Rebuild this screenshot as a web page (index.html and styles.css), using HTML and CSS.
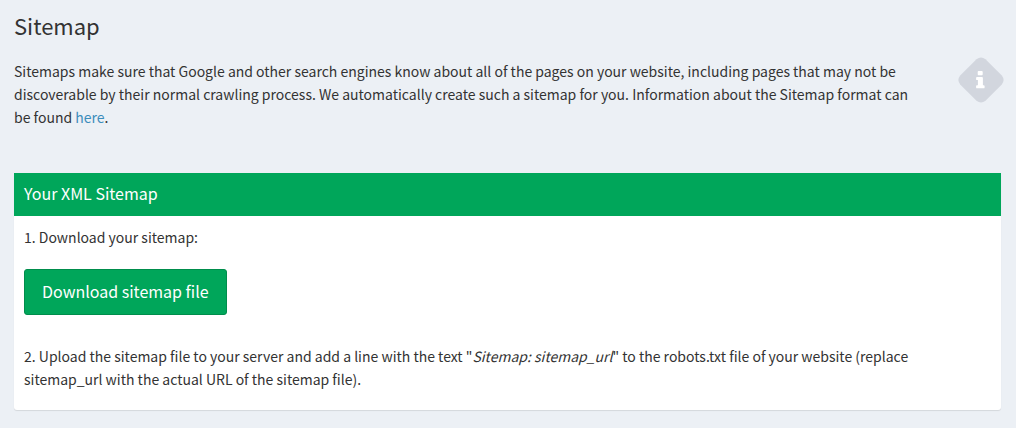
FILE: index.html
```html
<!DOCTYPE html>
<html lang="en">
<head>
    <meta charset="UTF-8">
    <meta name="viewport" content="width=device-width, initial-scale=1.0">
    <title>Sitemap</title>
    <link rel="stylesheet" href="styles.css">
</head>
<body>
    <main class="content">
        <h1>Sitemap</h1>
        <section class="intro">
            <p>Sitemaps make sure that Google and other search engines know about all of the pages on your website, including pages that may not be discoverable by their normal crawling process. We automatically create such a sitemap for you. Information about the Sitemap format can be found <a href="#">here</a>.</p>
            <svg class="info-icon" viewBox="0 0 46 46" aria-hidden="true">
                <path fill="#d2d6de" d="M18.5 2.2Q23-1.4 27.5 2.2L43.8 18.5Q47.4 23 43.8 27.5L27.5 43.8Q23 47.4 18.5 43.8L2.2 27.5Q-1.4 23 2.2 18.5Z"/>
                <path fill="#fff" d="M20.6 14h3.2q.9 0 .9.9v2.4q0 .9-.9.9h-3.2q-.9 0-.9-.9v-2.4q0-.9.9-.9zM19 20h5q.9 0 .9.9v7.3h.8q.9 0 .9.9v1.3q0 .9-.9.9H19q-.9 0-.9-.9v-1.3q0-.9.9-.9h.9v-5.1H19q-.9 0-.9-.9v-1.3q0-.9.9-.9z"/>
            </svg>
        </section>

        <section class="box">
            <h2 class="box-header">Your XML Sitemap</h2>
            <div class="box-body">
                <p>1. Download your sitemap:</p>
                <button type="button" class="btn">Download sitemap file</button>
                <p>2. Upload the sitemap file to your server and add a line with the text "<em>Sitemap: sitemap_url</em>" to the robots.txt file of your website (replace sitemap_url with the actual URL of the sitemap file).</p>
            </div>
        </section>
    </main>
</body>
</html>
```
FILE: styles.css
```css
body {
    margin: 0;
    font-family: "Noto Sans CJK SC", "Open Sans", sans-serif;
    font-size: 14px;
    line-height: 23px;
    background-color: #ecf0f5;
    color: #333;
}

h1, h2, p {
    margin: 0;
    font-weight: normal;
}

a {
    color: #3c8dbc;
    text-decoration: none;
}

.content {
    padding: 12px 15px 18px 14px;
}

h1 {
    font-size: 22px;
    line-height: 26px;
}

.intro {
    display: flex;
    align-items: flex-start;
    gap: 40px;
    margin-top: 22px;
}

.intro p {
    flex: 1;
}

.info-icon {
    flex: none;
    width: 46px;
    height: 46px;
    margin: -3px -3px 0 0;
}

.box {
    margin-top: 44px;
    background-color: #fff;
    border-radius: 3px;
    box-shadow: 0 1px 1px rgba(0,0,0,0.1);
}

.box-header {
    padding: 8px 10px 11px;
    font-size: 16px;
    line-height: 24px;
    background-color: #00a65a;
    color: #fff;
}

.box-body {
    padding: 10px 24px 19px 10px;
}

.btn {
    display: block;
    margin: 20px 0 30px;
    padding: 9px 17px 11px;
    border: 1px solid #008d4c;
    border-radius: 3px;
    background-color: #00a65a;
    color: #fff;
    font-family: inherit;
    font-size: 16px;
    line-height: 24px;
    cursor: pointer;
}

.btn:hover {
    background-color: #008d4c;
}
```
